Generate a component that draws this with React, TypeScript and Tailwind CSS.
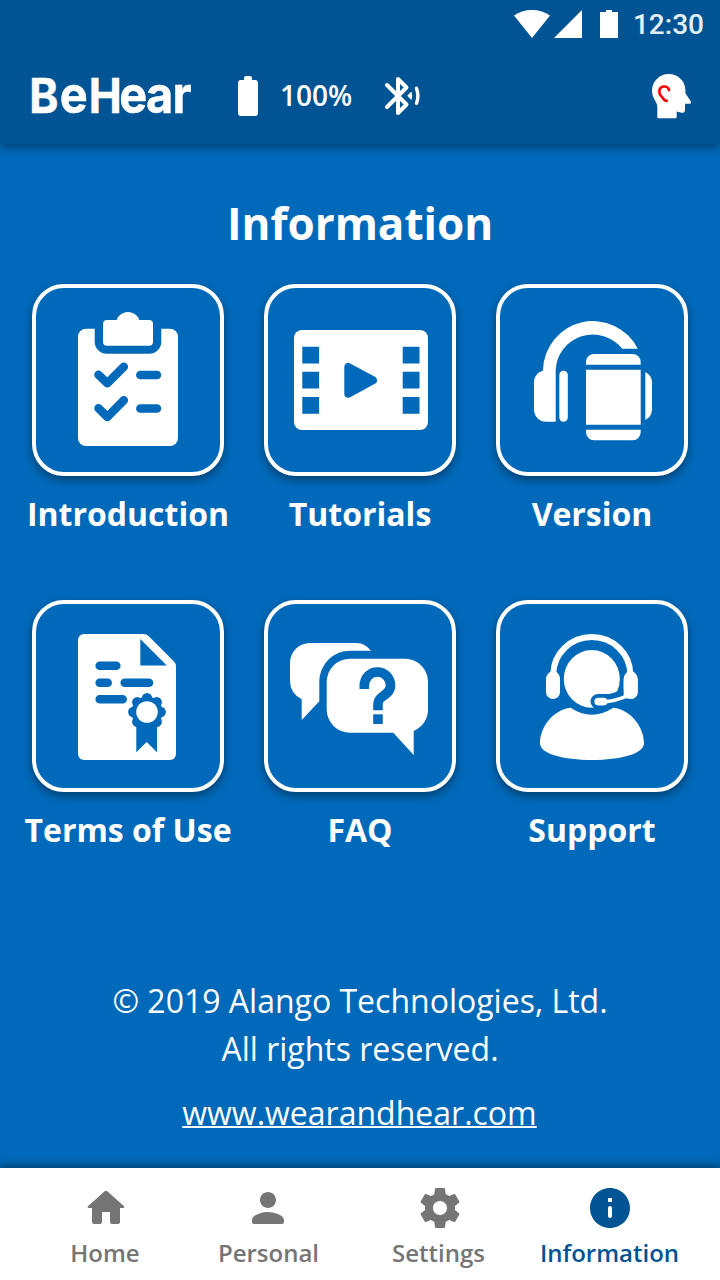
import type { ReactNode } from "react";

const BLUE = "#0069b9";

function StatusBar() {
  return (
    <div className="flex h-12 items-center justify-end pr-4">
      <svg width="104" height="28" viewBox="0 0 104 28" fill="white">
        <path d="M0 5.6C5 2 11 0 18 0s13 2 18 5.6L18 28z" />
        <path d="M68 0v28H40z" />
        <path d="M86 2h6V0h6v2h6v26H86z" />
      </svg>
      <span className="ml-[15px] pt-px font-['Roboto',sans-serif] text-[28px] font-medium leading-none text-white/90">
        12:30
      </span>
    </div>
  );
}

function Logo() {
  return (
    <svg className="-ml-2 mr-6 overflow-visible" width="176" height="64" viewBox="-8 -8 176 64">
      <text
        x="-3 30.2 61.8 94.8 123.8 152.8"
        y="41"
        transform="scale(0.92 1)"
        className="font-['Inter',sans-serif] font-bold"
        fontSize="48"
        fill="white"
        stroke="white"
        strokeWidth="0.5"
      >
        B<tspan fontSize="51">e</tspan>H<tspan fontSize="51">ear</tspan>
      </text>
    </svg>
  );
}

function BluetoothIcon() {
  return (
    <svg width="40" height="40" viewBox="0 0 40 40" fill="none" stroke="white" strokeLinecap="round" strokeLinejoin="round">
      <path d="M3 9l19.500 19.500L14 37V3l8.500 8.500L3 31" strokeWidth="4" />
      <path d="M23.300 19.700l3.300-3.500q.9-.7 1.200.3.600 3.200 0 6.400-.3 1-1.200.3z" fill="white" stroke="none" />
      <path d="M32.500 12.300q2.800 7.500 0 15" strokeWidth="3.400" />
    </svg>
  );
}

function HeadIcon() {
  return (
    <svg width="40" height="46" viewBox="0 0 40 46" fill="none">
      <path
        d="M16.700 1C26 1 33.400 8 33.400 17v3.200l5.300 8c.9 1.500.3 2.500-1.200 2.500H33v6c0 2.200-1.500 3.500-3.500 3l-4.800-1.200V44q0 1.300-1.300 1.300H6.600q-1.300 0-1.300-1.300V33C4.600 28 0 25 0 17.700 0 8.500 7.500 1 16.700 1z"
        fill="white"
      />
      <path
        d="M17 17.200C16.500 12 7.200 12 7.300 18.800c.1 3.700 2.700 4.700 4.200 7.200q1.200 2 3.200 1.800"
        stroke="#ff0000"
        strokeWidth="2.700"
        strokeLinecap="round"
      />
    </svg>
  );
}

function Header() {
  return (
    <header className="z-10 h-36 bg-[#005493] shadow-[0_4px_8px_rgba(0,0,0,0.35)]">
      <StatusBar />
      <div className="flex h-24 items-center px-8">
        <Logo />
        <svg className="mr-[8px]" width="48" height="48" viewBox="0 0 24 24" fill="white">
          <path d="M15.67 4H14V3c0-.55-.45-1-1-1h-2c-.55 0-1 .45-1 1v1H8.330C7.600 4 7 4.600 7 5.330v15.330C7 21.400 7.600 22 8.330 22h7.330c.74 0 1.340-.6 1.340-1.330V5.330C17 4.600 16.400 4 15.670 4z" />
        </svg>
        <span className="w-[104px] pb-0.5 text-[28px] font-semibold leading-none text-white">100%</span>
        <BluetoothIcon />
        <div className="ml-auto -mr-1">
          <HeadIcon />
        </div>
      </div>
    </header>
  );
}

const introduction = (
  <>
    <path d="M50 40.700h8.700v13a12 12 0 0 0 12 12h42.600a12 12 0 0 0 12-12v-13h8.700a8 8 0 0 1 8 8V150a8 8 0 0 1-8 8H50a8 8 0 0 1-8-8V48.700a8 8 0 0 1 8-8z" />
    <rect x="67" y="32" width="50" height="25.700" rx="4" />
    <circle cx="92" cy="36" r="12" />
    <g fill="none" stroke={BLUE} strokeWidth="8.500" strokeLinecap="round" strokeLinejoin="round">
      <path d="M62.500 86.700l8.800 8.600 16.500-16.600M62.500 120.300l8.800 8.600 16.500-16.600" />
      <path d="M104.300 87H121M104.300 120.500H121" />
    </g>
  </>
);

const tutorials = (
  <>
    <rect x="26" y="42" width="134" height="100" rx="8" />
    <path
      d="M34.300 58.700h16.800v16.800H34.300zM34.300 83.800h16.800v16.800H34.300zM34.300 109h16.800v16.800H34.300zM134.700 58.700h16.800v16.800h-16.800zM134.700 83.800h16.800v16.800h-16.800zM134.700 109h16.800v16.800h-16.800z"
      fill={BLUE}
    />
    <path d="M80.300 79v26.700l24.700-13.400z" fill={BLUE} stroke={BLUE} strokeWidth="8" strokeLinejoin="round" />
  </>
);

const version = (
  <>
    <path d="M43 82A50 50 0 0 1 137.700 60.700H122.200A37.300 37.300 0 0 0 55.700 82v51.700H46a12 12 0 0 1-12-12V94.500c0-6 3.500-10.500 9-11.800z" />
    <rect x="59.300" y="82.700" width="8.500" height="51" rx="4.200" />
    <path d="M86 76.700V74a8 8 0 0 1 8-8h38.700a8 8 0 0 1 8 8v2.700zM86 81.700h54.700v55H86zM86 141.700h54.700v2.600a8 8 0 0 1-8 8H94a8 8 0 0 1-8-8z" />
    <path d="M145.300 84q6.700 3.500 6.700 11v26q0 7.500-6.700 11z" />
  </>
);

const terms = (
  <>
    <path d="M48 30h59.500q3 0 5 2L138 57.500q2 2 2 5V150a6 6 0 0 1-6 6H48a6 6 0 0 1-6-6V36a6 6 0 0 1 6-6z" />
    <path d="M104.300 35v26.500h26.500z" fill={BLUE} />
    <path
      d="M63.700 61.700h16.600M63.700 78.700h8M88.700 78.700H113M63.700 95.300h23"
      stroke={BLUE}
      strokeWidth="8.600"
      strokeLinecap="round"
    />
    <g fill={BLUE}>
      <path d="M100.300 112H121v36.300L110.700 138l-10.400 10.300z" />
      <circle cx="111" cy="108" r="15.500" />
      <circle cx="111" cy="94.300" r="5.200" />
      <circle cx="120.700" cy="98.300" r="5.200" />
      <circle cx="124.700" cy="108" r="5.200" />
      <circle cx="120.700" cy="117.700" r="5.200" />
      <circle cx="101.300" cy="117.700" r="5.200" />
      <circle cx="97.300" cy="108" r="5.200" />
      <circle cx="101.300" cy="98.300" r="5.200" />
    </g>
    <circle cx="111" cy="108" r="10.800" />
  </>
);

const faq = (
  <>
    <path d="M42 39h46.700q8.300.3 14.300 7.700H82A30.700 30.700 0 0 0 51.300 77.400v19.900L33.700 116V95.300Q22 89 22 77V59a20 20 0 0 1 20-20z" />
    <path d="M82 54.700h55A23 23 0 0 1 160 77.700V105q0 15-14.300 22v24l-20.400-22.300H82a23.300 23.300 0 0 1-23.300-23.300V78A23.300 23.300 0 0 1 82 54.700z" />
    <path d="M96.300 85v-3.500a13.100 13.500 0 0 1 26.200 0C122.500 91.500 110 91.500 110 99.500v6.700" fill="none" stroke={BLUE} strokeWidth="9.600" />
    <rect x="105.200" y="110.300" width="9.600" height="9.700" fill={BLUE} />
  </>
);

const support = (
  <>
    <path d="M53.300 70.500a38.500 37.500 0 0 1 77 0" fill="none" stroke="white" strokeWidth="6" />
    <path d="M50 68q3-4 6.500 0 3.500 3 3.500 7v13a7 7 0 0 1-14 0V75q0-4 4-7zM127.300 68q3-4 6.500 0 3.900 3 3.900 7v13a7 7 0 0 1-7 7q-3 0-7-3V75q0-4 3.600-7z" />
    <ellipse cx="91.800" cy="74.900" rx="28" ry="28.900" />
    <path d="M98 97.500h7q7 .5 18-4.500" fill="none" stroke={BLUE} strokeWidth="15" strokeLinecap="round" />
    <path d="M123.700 75h14v13a7 7 0 0 1-7 7q-4 0-7-2z" />
    <path d="M98.200 97.600h5.500" stroke="white" strokeWidth="7.700" strokeLinecap="round" />
    <path d="M104 97.600q9 .2 22-5.300" fill="none" stroke="white" strokeWidth="3.600" />
    <path d="M70.700 103.700q21 14 42.600 0C132 106 144 124 144 139.300c0 10.700-23.300 16.700-52 16.700s-52-6-52-16.700C40 124 52 106 70.700 103.700z" />
  </>
);

const tiles: { label: string; icon: ReactNode }[] = [
  { label: "Introduction", icon: introduction },
  { label: "Tutorials", icon: tutorials },
  { label: "Version", icon: version },
  { label: "Terms of Use", icon: terms },
  { label: "FAQ", icon: faq },
  { label: "Support", icon: support },
];

function Tile({ label, icon }: { label: string; icon: ReactNode }) {
  return (
    <div className="flex w-48 flex-col items-center">
      <button className="size-48 rounded-[32px] border-4 border-white bg-[#0069b9] shadow-[0_4px_8px_rgba(0,0,0,0.4)]">
        <svg width="184" height="184" viewBox="0 0 184 184" fill="white">
          {icon}
        </svg>
      </button>
      <span className="mt-3.5 whitespace-nowrap text-[32px] font-bold leading-[48px]">{label}</span>
    </div>
  );
}

const navItems = [
  {
    label: "Home",
    className: "w-[164px] text-[#757575]",
    labelClassName: "-ml-0.5",
    path: "M10 19v-5h4v5c0 .55.45 1 1 1h3c.55 0 1-.45 1-1v-7h1.700c.46 0 .68-.57.33-.87L12.670 3.600c-.38-.34-.96-.34-1.340 0l-8.360 7.530c-.34.3-.13.87.33.87H5v7c0 .55.45 1 1 1h3c.55 0 1-.45 1-1z",
  },
  {
    label: "Personal",
    className: "w-[160px] text-[#757575]",
    labelClassName: "ml-px",
    path: "M12 12c2.210 0 4-1.790 4-4s-1.790-4-4-4-4 1.790-4 4 1.790 4 4 4zm0 2c-2.670 0-8 1.340-8 4v1c0 .55.45 1 1 1h14c.55 0 1-.45 1-1v-1c0-2.660-5.330-4-8-4z",
  },
  {
    label: "Settings",
    className: "w-[184px] text-[#757575]",
    labelClassName: "-ml-[3px]",
    path: "M19.43 12.98c.04-.32.07-.64.07-.98s-.03-.66-.07-.98l2.11-1.65c.19-.15.24-.42.12-.64l-2-3.46c-.12-.22-.39-.3-.61-.22l-2.49 1c-.52-.4-1.08-.73-1.69-.98l-.38-2.65C14.46 2.18 14.25 2 14 2h-4c-.25 0-.46.18-.49.42l-.38 2.65c-.61.25-1.17.59-1.69.98l-2.49-1c-.23-.09-.49 0-.61.22l-2 3.46c-.13.22-.07.49.12.64l2.11 1.65c-.04.32-.07.65-.07.98s.03.66.07.98l-2.11 1.65c-.19.15-.24.42-.12.64l2 3.46c.12.22.39.3.61.22l2.49-1c.52.4 1.08.73 1.69.98l.38 2.65c.03.24.24.42.49.42h4c.25 0 .46-.18.49-.42l.38-2.65c.61-.25 1.17-.59 1.69-.98l2.49 1c.23.09.49 0 .61-.22l2-3.46c.12-.22.07-.49-.12-.64l-2.11-1.65zM12 15.5c-1.93 0-3.5-1.57-3.5-3.5s1.57-3.5 3.5-3.5 3.5 1.57 3.5 3.5-1.57 3.5-3.5 3.5z",
  },
  {
    label: "Information",
    className: "w-[156px] text-[#005493]",
    labelClassName: "-ml-px",
    path: "M12 2C6.48 2 2 6.48 2 12s4.48 10 10 10 10-4.48 10-10S17.52 2 12 2zm0 15c-.55 0-1-.45-1-1v-4c0-.55.45-1 1-1s1 .45 1 1v4c0 .55-.45 1-1 1zm1-8h-2V7h2v2z",
  },
];

function BottomNav() {
  return (
    <nav className="flex h-28 bg-white pl-6 pt-4 shadow-[0_-2px_8px_rgba(0,0,0,0.45)]">
      {navItems.map((item) => (
        <div key={item.label} className={`flex flex-col items-center ${item.className}`}>
          <svg width="48" height="48" viewBox="0 0 24 24" fill="currentColor">
            <path d={item.path} />
          </svg>
          <span className={`mt-[5px] text-2xl font-semibold leading-8 ${item.labelClassName}`}>{item.label}</span>
        </div>
      ))}
    </nav>
  );
}

export default function App() {
  return (
    <div className="flex h-[1280px] w-[720px] flex-col overflow-hidden bg-[#0069b9] font-['Open_Sans',sans-serif] text-white">
      <Header />
      <main className="flex flex-1 flex-col px-8 pt-[49px]">
        <h1 className="text-center text-[44px] font-bold leading-[60px]">Information</h1>
        <div className="mt-[31px] grid grid-cols-3 gap-x-10 gap-y-[62px]">
          {tiles.map((tile) => (
            <Tile key={tile.label} {...tile} />
          ))}
        </div>
        <footer className="mt-[123px] text-center text-[32px] leading-[48px]">
          <p>© 2019 Alango Technologies, Ltd.</p>
          <p>All rights reserved.</p>
          <a className="-ml-px mt-4 inline-block underline decoration-2">www.wearandhear.com</a>
        </footer>
      </main>
      <BottomNav />
    </div>
  );
}
